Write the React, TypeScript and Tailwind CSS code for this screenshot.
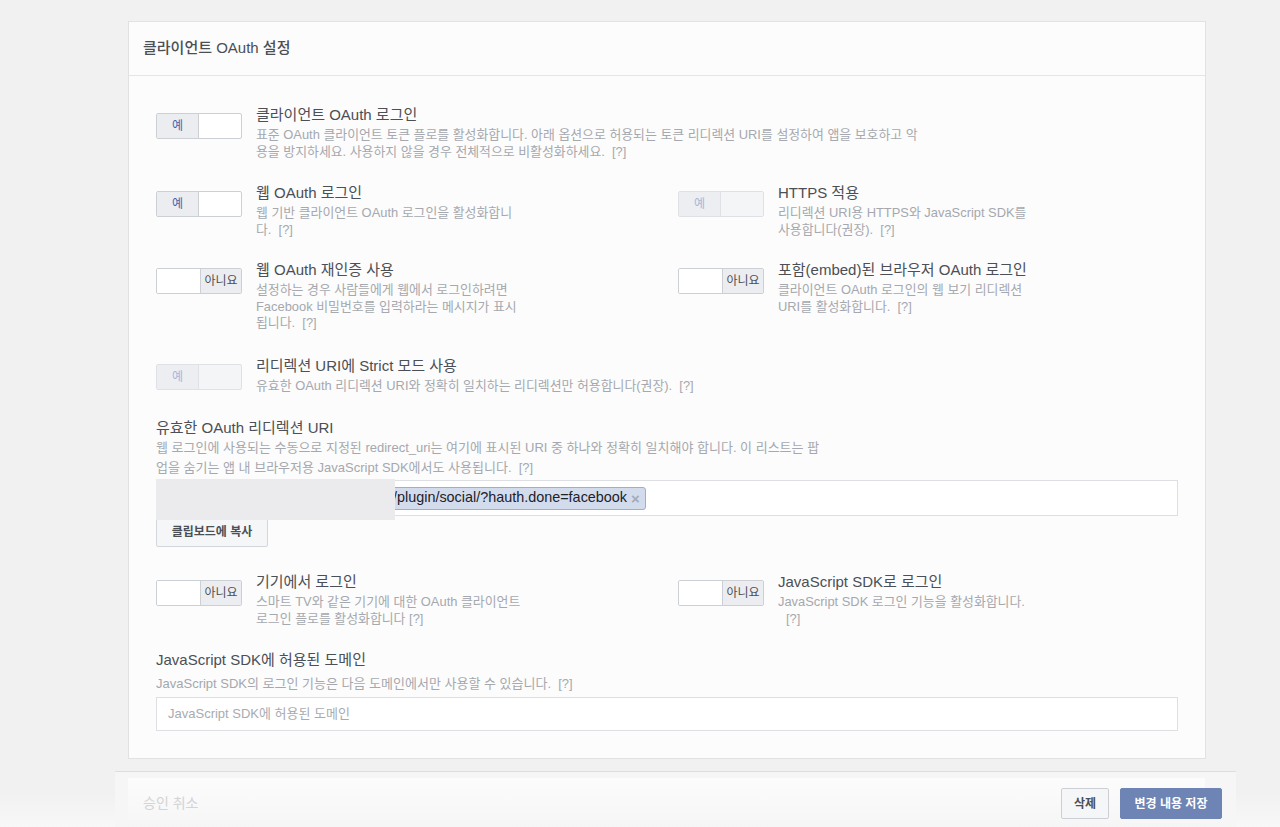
import React from "react";

type ToggleState = "on" | "off" | "disabled";

type Setting = {
  state: ToggleState;
  title: string;
  lines: string[];
  indentLast?: boolean;
};

function Toggle({ state }: { state: ToggleState }) {
  if (state === "off") {
    return (
      <div className="mt-[8px] flex h-[26px] w-[86px] shrink-0 overflow-hidden rounded-[2px] border border-[#ccd0d5] bg-white">
        <div className="w-[43px] bg-white" />
        <div className="flex flex-1 items-center justify-center border-l border-[#ccd0d5] bg-[#ebedf0] text-[12px] text-[#4b4f56]">
          아니요
        </div>
      </div>
    );
  }
  const disabled = state === "disabled";
  return (
    <div
      className={
        disabled
          ? "mt-[8px] flex h-[26px] w-[86px] shrink-0 overflow-hidden rounded-[2px] border border-[#dfe1e5] bg-[#f4f5f7]"
          : "mt-[8px] flex h-[26px] w-[86px] shrink-0 overflow-hidden rounded-[2px] border border-[#ccd0d5] bg-white"
      }
    >
      <div
        className={
          disabled
            ? "flex w-[42px] items-center justify-center border-r border-[#dfe1e5] bg-[#eceef1] text-[12px] text-[#a8b8dc]"
            : "flex w-[42px] items-center justify-center border-r border-[#ccd0d5] bg-[#ebedf0] text-[12px] text-[#4267b2]"
        }
      >
        예
      </div>
      <div className="flex-1" />
    </div>
  );
}

function SettingRow({ s }: { s: Setting }) {
  return (
    <div className="flex gap-[14px]">
      <Toggle state={s.state} />
      <div>
        <div className="text-[15px] leading-[20px] text-[#4b4f56]">{s.title}</div>
        <div className="mt-[2px] text-[12.9px] leading-[16.5px] text-[#a5a8ae]">
          {s.lines.map((line, i) => (
            <div
              key={i}
              className={
                s.indentLast && i === s.lines.length - 1
                  ? "whitespace-pre pl-[8px]"
                  : "whitespace-pre"
              }
            >
              {line}
            </div>
          ))}
        </div>
      </div>
    </div>
  );
}

const clientLogin: Setting = {
  state: "on",
  title: "클라이언트 OAuth 로그인",
  lines: [
    "표준 OAuth 클라이언트 토큰 플로를 활성화합니다. 아래 옵션으로 허용되는 토큰 리디렉션 URI를 설정하여 앱을 보호하고 악",
    "용을 방지하세요. 사용하지 않을 경우 전체적으로 비활성화하세요.  [?]",
  ],
};

const webLogin: Setting = {
  state: "on",
  title: "웹 OAuth 로그인",
  lines: ["웹 기반 클라이언트 OAuth 로그인을 활성화합니", "다.  [?]"],
};

const httpsOnly: Setting = {
  state: "disabled",
  title: "HTTPS 적용",
  lines: ["리디렉션 URI용 HTTPS와 JavaScript SDK를", "사용합니다(권장).  [?]"],
};

const reauth: Setting = {
  state: "off",
  title: "웹 OAuth 재인증 사용",
  lines: [
    "설정하는 경우 사람들에게 웹에서 로그인하려면",
    "Facebook 비밀번호를 입력하라는 메시지가 표시",
    "됩니다.  [?]",
  ],
};

const embedded: Setting = {
  state: "off",
  title: "포함(embed)된 브라우저 OAuth 로그인",
  lines: ["클라이언트 OAuth 로그인의 웹 보기 리디렉션", "URI를 활성화합니다.  [?]"],
};

const strictMode: Setting = {
  state: "disabled",
  title: "리디렉션 URI에 Strict 모드 사용",
  lines: ["유효한 OAuth 리디렉션 URI와 정확히 일치하는 리디렉션만 허용합니다(권장).  [?]"],
};

const deviceLogin: Setting = {
  state: "off",
  title: "기기에서 로그인",
  lines: ["스마트 TV와 같은 기기에 대한 OAuth 클라이언트", "로그인 플로를 활성화합니다 [?]"],
};

const jsSdkLogin: Setting = {
  state: "off",
  title: "JavaScript SDK로 로그인",
  lines: ["JavaScript SDK 로그인 기능을 활성화합니다.", "[?]"],
  indentLast: true,
};

export default function App() {
  return (
    <div className="relative h-[827px] overflow-hidden bg-[#f1f1f1] font-['Liberation_Sans','Noto_Sans_CJK_KR',sans-serif]">
      {/* Settings card */}
      <div className="ml-[128px] mt-[21px] w-[1078px] border border-[#e2e2e2] bg-[#fcfcfc]">
        <div className="flex h-[54px] items-center border-b border-[#e5e5e5] px-[14px]">
          <span className="text-[15px] font-medium text-[#4b4f56]">클라이언트 OAuth 설정</span>
        </div>

        <div className="px-[27px] pb-[27px] pt-[29px]">
          <SettingRow s={clientLogin} />

          <div className="mt-[23px] grid grid-cols-[522px_1fr]">
            <SettingRow s={webLogin} />
            <SettingRow s={httpsOnly} />
          </div>

          <div className="mt-[22px] grid grid-cols-[522px_1fr]">
            <SettingRow s={reauth} />
            <SettingRow s={embedded} />
          </div>

          <div className="mt-[24px]">
            <SettingRow s={strictMode} />
          </div>

          {/* Redirect URIs */}
          <div className="mt-[24px] text-[15px] leading-[20px] text-[#4b4f56]">유효한 OAuth 리디렉션 URI</div>
          <div className="text-[13px] leading-[20px] text-[#a5a8ae]">
            <div className="whitespace-pre">웹 로그인에 사용되는 수동으로 지정된 redirect_uri는 여기에 표시된 URI 중 하나와 정확히 일치해야 합니다. 이 리스트는 팝</div>
            <div className="whitespace-pre">업을 숨기는 앱 내 브라우저용 JavaScript SDK에서도 사용됩니다.  [?]</div>
          </div>
          <div className="relative mt-[2px]">
            <div className="flex h-[36px] items-center border border-[#dddfe2] bg-white">
              <div className="ml-[227px] flex h-[23px] items-center gap-[4px] rounded-[3px] border border-[#9cafd3] bg-[#d3dcec] pl-[8px] pr-[5px] text-[14.4px] text-[#1d2129]">
                <span>/plugin/social/?hauth.done=facebook</span>
                <span className="text-[15px] font-bold leading-none text-[#a3abb8]">×</span>
              </div>
            </div>
            <button className="flex h-[31px] w-[112px] items-center justify-center rounded-[2px] border border-[#d3d6db] bg-[#f5f6f7] text-[12px] font-bold text-[#4b4f56]">
              클립보드에 복사
            </button>
            <div className="absolute left-0 top-[-1px] z-10 h-[41px] w-[239px] bg-[#ebebed]" />
          </div>

          <div className="mt-[25px] grid grid-cols-[522px_1fr]">
            <SettingRow s={deviceLogin} />
            <SettingRow s={jsSdkLogin} />
          </div>

          {/* JS SDK domains */}
          <div className="mt-[23px] text-[15px] leading-[20px] text-[#4b4f56]">JavaScript SDK에 허용된 도메인</div>
          <div className="mt-[4px] whitespace-pre text-[13px] leading-[20px] text-[#a5a8ae]">
            JavaScript SDK의 로그인 기능은 다음 도메인에서만 사용할 수 있습니다.  [?]
          </div>
          <div className="mt-[3px] flex h-[34px] items-center border border-[#dddfe2] bg-white px-[11px] text-[13px] text-[#a8abb1]">
            JavaScript SDK에 허용된 도메인
          </div>
        </div>
      </div>

      {/* Fixed bottom bar */}
      <div className="pointer-events-none absolute bottom-0 left-0 right-0 h-[34px] bg-gradient-to-b from-transparent to-white/50" />
      <div className="relative ml-[115px] mt-[12px] h-[70px] w-[1121px] border-t border-[#dadde1] bg-[#f6f6f7]">
        <div className="absolute bottom-0 left-[13px] right-[31px] top-[6px] bg-gradient-to-b from-[#fcfcfc] to-[#f4f4f4]" />
        <div className="relative flex items-start justify-between pl-[28px] pr-[14px] pt-[16px]">
          <span className="mt-[5px] text-[14px] text-[#d3d4d6]">승인 취소</span>
          <div className="flex gap-[11px]">
            <button className="flex h-[31px] w-[48px] items-center justify-center rounded-[2px] border border-[#ccd0d5] bg-[#f5f6f7] text-[12px] font-bold text-[#4b4f56]">
              삭제
            </button>
            <button className="flex h-[31px] w-[102px] items-center justify-center rounded-[2px] border border-[#6d84b4] bg-[#6d84b4] text-[12px] font-bold text-white">
              변경 내용 저장
            </button>
          </div>
        </div>
      </div>
    </div>
  );
}
